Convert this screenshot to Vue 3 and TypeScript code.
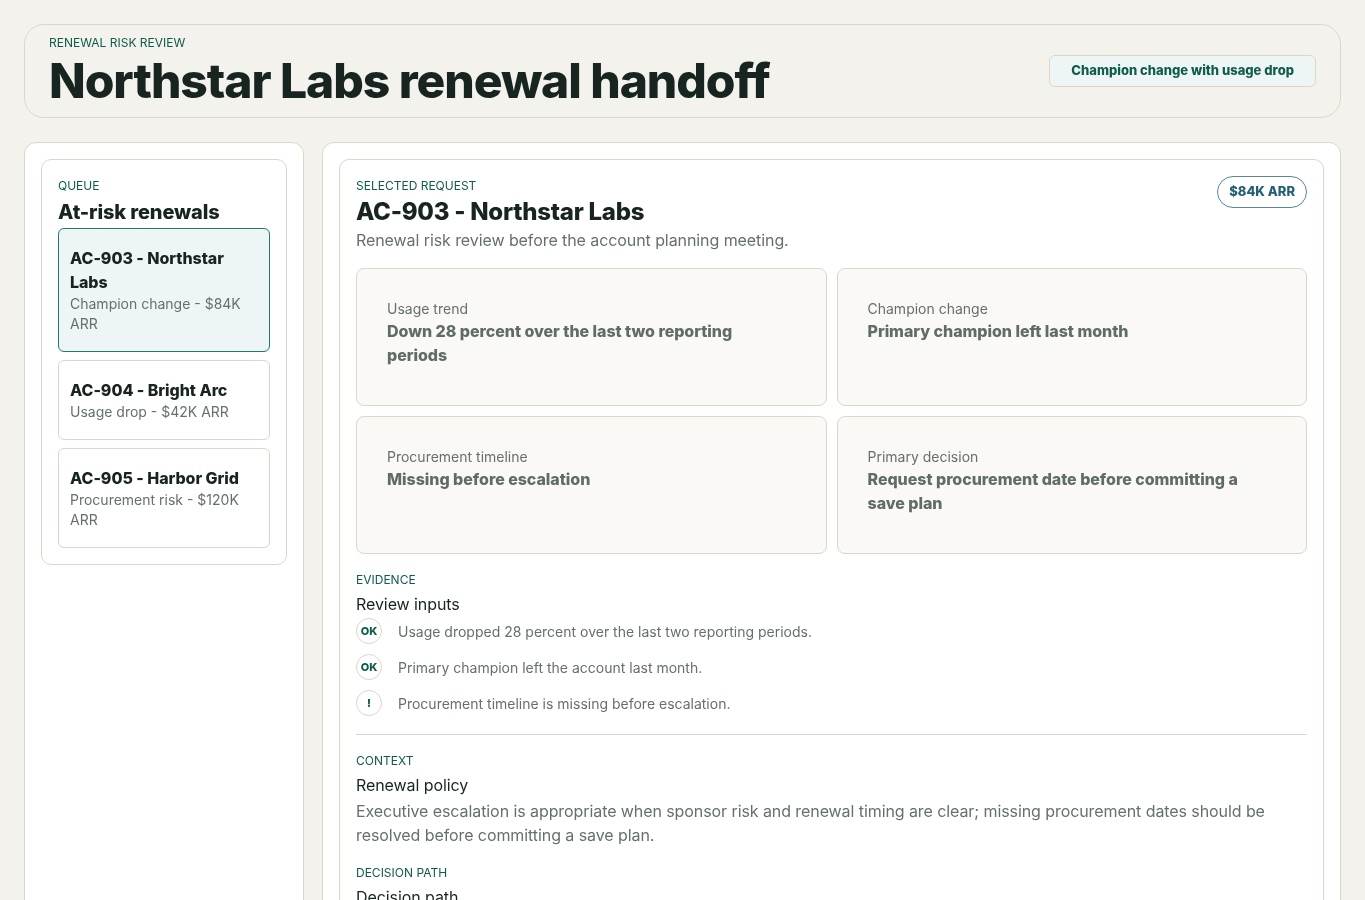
<template>
  <div class="page">
    <header class="topbar">
      <div>
        <p class="eyebrow">RENEWAL RISK REVIEW</p>
        <h1>Northstar Labs renewal handoff</h1>
      </div>
      <div class="flag">Champion change with usage drop</div>
    </header>

    <div class="layout">
      <aside class="panel">
        <section class="card queue">
          <p class="eyebrow">QUEUE</p>
          <h2 class="queue-title">At-risk renewals</h2>
          <div class="queue-list">
            <div
              v-for="item in queue"
              :key="item.id"
              class="queue-item"
              :class="{ active: item.active }"
            >
              <strong>{{ item.title }}</strong>
              <span>{{ item.meta }}</span>
            </div>
          </div>
        </section>
      </aside>

      <main class="panel">
        <section class="card detail">
          <div class="detail-head">
            <div>
              <p class="eyebrow">SELECTED REQUEST</p>
              <h2 class="detail-title">AC-903 - Northstar Labs</h2>
              <p class="detail-sub">Renewal risk review before the account planning meeting.</p>
            </div>
            <span class="arr">$84K ARR</span>
          </div>

          <div class="facts">
            <div v-for="fact in facts" :key="fact.label" class="fact">
              <span>{{ fact.label }}</span>
              <strong>{{ fact.value }}</strong>
            </div>
          </div>

          <div class="block evidence">
            <p class="eyebrow">EVIDENCE</p>
            <h3>Review inputs</h3>
            <ul>
              <li v-for="row in evidence" :key="row.text">
                <span class="mark">{{ row.mark }}</span>
                <span>{{ row.text }}</span>
              </li>
            </ul>
          </div>

          <div class="block context">
            <p class="eyebrow">CONTEXT</p>
            <h3>Renewal policy</h3>
            <p class="body-text">
              Executive escalation is appropriate when sponsor risk and renewal timing are clear; missing procurement dates should be resolved before committing a save plan.
            </p>
          </div>

          <div class="block path">
            <p class="eyebrow">DECISION PATH</p>
            <h3>Decision path</h3>
          </div>
        </section>
      </main>
    </div>
  </div>
</template>

<script setup lang="ts">
interface QueueItem {
  id: string;
  title: string;
  meta: string;
  active?: boolean;
}

const queue: QueueItem[] = [
  { id: 'AC-903', title: 'AC-903 - Northstar Labs', meta: 'Champion change - $84K ARR', active: true },
  { id: 'AC-904', title: 'AC-904 - Bright Arc', meta: 'Usage drop - $42K ARR' },
  { id: 'AC-905', title: 'AC-905 - Harbor Grid', meta: 'Procurement risk - $120K ARR' }
];

const facts = [
  { label: 'Usage trend', value: 'Down 28 percent over the last two reporting periods' },
  { label: 'Champion change', value: 'Primary champion left last month' },
  { label: 'Procurement timeline', value: 'Missing before escalation' },
  { label: 'Primary decision', value: 'Request procurement date before committing a save plan' }
];

const evidence = [
  { mark: 'OK', text: 'Usage dropped 28 percent over the last two reporting periods.' },
  { mark: 'OK', text: 'Primary champion left the account last month.' },
  { mark: '!', text: 'Procurement timeline is missing before escalation.' }
];
</script>

<style>
html,
body {
  margin: 0;
  background: #f4f2ed;
}
</style>

<style scoped>
* {
  box-sizing: border-box;
}

.page {
  padding: 24px;
  font-family: Inter, "Liberation Sans", sans-serif;
  color: #18241f;
  will-change: transform;
}

p,
h1,
h2,
h3,
ul {
  margin: 0;
  padding: 0;
}

.eyebrow {
  font-size: 12px;
  line-height: 16px;
  color: #0f5c4d;
}

.topbar {
  display: flex;
  align-items: center;
  justify-content: space-between;
  height: 94px;
  padding: 10px 24px 0;
  border: 1px solid #ddd6c8;
  border-radius: 20px;
}

.topbar > div:first-child {
  align-self: flex-start;
}

h1 {
  font-size: 48px;
  line-height: 48px;
  font-weight: 800;
  letter-spacing: -1.06px;
  margin-top: 6px;
}

.flag {
  margin-top: -10px;
  padding: 6px 21px 8px;
  font-size: 13px;
  line-height: 16px;
  font-weight: 800;
  color: #0f5c4d;
  background: #edf5f6;
  border: 1px solid #ddd6c8;
  border-radius: 6px;
}

.layout {
  display: grid;
  grid-template-columns: 280px 1fr;
  gap: 18px;
  margin-top: 24px;
}

.panel {
  padding: 16px;
  background: #fff;
  border: 1px solid #ddd6c8;
  border-radius: 12px;
}

.card {
  padding: 16px;
  border: 1px solid #ddd6c8;
  border-radius: 10px;
}

.queue {
  padding-top: 18px;
}

.queue-title {
  margin-top: 4px;
  margin-bottom: 2px;
  font-size: 20px;
  line-height: 28px;
  font-weight: 800;
  letter-spacing: -0.14px;
}

.queue-list {
  display: flex;
  flex-direction: column;
  gap: 8px;
}

.queue-item {
  display: flex;
  flex-direction: column;
  padding: 17px 11px;
  border: 1px solid #ddd6c8;
  border-radius: 6px;
}

.queue-item.active {
  background: #edf5f6;
  border-color: #1f7a6d;
}

.queue-item strong {
  font-size: 16px;
  line-height: 24px;
  font-weight: 800;
  letter-spacing: -0.05px;
}

.queue-item span {
  font-size: 14px;
  line-height: 20px;
  color: #66706b;
}

.detail-head {
  display: flex;
  justify-content: space-between;
  align-items: flex-start;
  padding-top: 2px;
}

.detail-title {
  margin-top: 2px;
  font-size: 24px;
  line-height: 32px;
  font-weight: 800;
  letter-spacing: -0.26px;
}

.detail-sub {
  font-size: 16px;
  line-height: 24px;
  letter-spacing: -0.08px;
  color: #66706b;
}

.arr {
  margin-top: -2px;
  padding: 6px 11px 8px;
  font-size: 13px;
  line-height: 16px;
  font-weight: 800;
  color: #235f75;
  border: 1px solid #5c8796;
  border-radius: 16px;
}

.facts {
  display: grid;
  grid-template-columns: 1fr 1fr;
  gap: 10px;
  margin-top: 16px;
}

.fact {
  display: flex;
  flex-direction: column;
  min-height: 138px;
  padding: 30px;
  background: #faf9f5;
  border: 1px solid #ddd6c8;
  border-radius: 8px;
}

.fact span {
  font-size: 14px;
  line-height: 20px;
  color: #66706b;
}

.fact strong {
  font-size: 16px;
  line-height: 24px;
  font-weight: 800;
  letter-spacing: -0.04px;
  color: #5f6d65;
}

.block h3 {
  margin-top: 4px;
  font-size: 16px;
  line-height: 24px;
  font-weight: 400;
  letter-spacing: -0.08px;
}

.evidence {
  margin-top: 18px;
  padding-bottom: 18px;
  border-bottom: 1px solid #ddd6c8;
}

.evidence ul {
  list-style: none;
  margin-top: 2px;
}

.evidence li {
  display: flex;
  align-items: center;
  gap: 16px;
  height: 26px;
  margin-bottom: 10px;
  font-size: 14px;
  color: #66706b;
}

.evidence li:last-child {
  margin-bottom: 0;
}

.mark {
  display: flex;
  align-items: center;
  justify-content: center;
  width: 26px;
  height: 26px;
  font-size: 11px;
  font-weight: 800;
  color: #0f5c4d;
  border: 1px solid #ddd6c8;
  border-radius: 50%;
}

.context {
  margin-top: 18px;
}

.body-text {
  margin-top: 2px;
  font-size: 16px;
  line-height: 24px;
  letter-spacing: -0.08px;
  color: #66706b;
}

.path {
  margin-top: 18px;
}
</style>
